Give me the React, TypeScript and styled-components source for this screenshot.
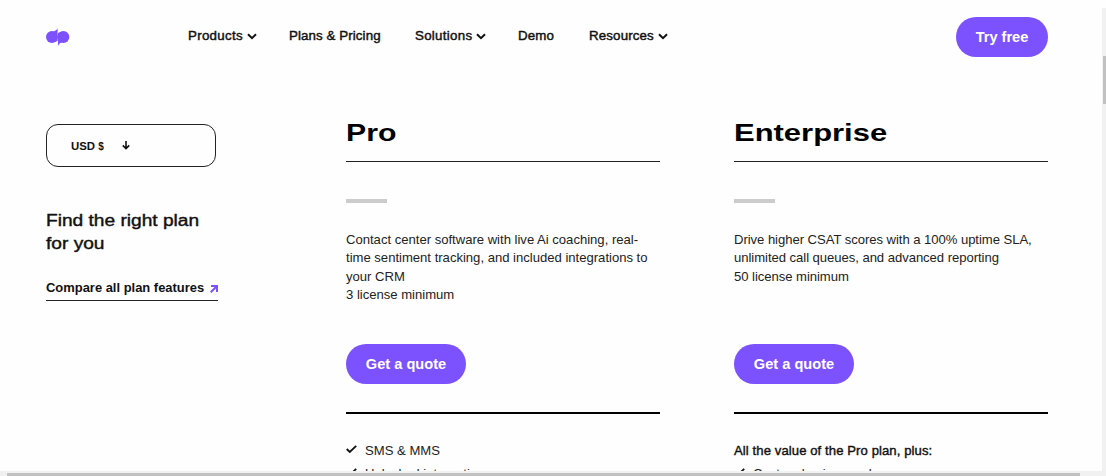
import styled, { createGlobalStyle } from 'styled-components';

const App = () => {
  return (
    <>
      <GlobalStyle />
      <Frame>
        <Page>
          <Header>
            <Logo />
            <Nav>
              <NavLink $width={101}><Label $spacing={0.3}>Products</Label><Chevron /></NavLink>
              <NavLink $width={126}><Label $spacing={0.1}>Plans &amp; Pricing</Label></NavLink>
              <NavLink $width={103}><Label $spacing={0.3}>Solutions</Label><Chevron /></NavLink>
              <NavLink $width={71}><Label $spacing={0.15}>Demo</Label></NavLink>
              <NavLink $width={82}><Label $spacing={0.15}>Resources</Label><Chevron /></NavLink>
            </Nav>
            <PillButton $width={92}>Try free</PillButton>
          </Header>
          <Main>
            <Sidebar>
              <Currency>
                <span>USD <small>$</small></span>
                <DownArrow />
              </Currency>
              <Tagline><Wide $scale={1.195}>Find the right plan<br />for you</Wide></Tagline>
              <CompareLink><span>Compare all plan features</span><OutArrow /></CompareLink>
            </Sidebar>
            {plans.map((plan) => (
              <Plan key={plan.name}>
                <PlanName><Wide $scale={plan.nameScale}>{plan.name}</Wide></PlanName>
                <Dash />
                <Description $spacing={plan.spacing}>
                  {plan.description.map((line) => <div key={line}>{line}</div>)}
                </Description>
                <PillButton $width={120}>Get a quote</PillButton>
                <Features>
                  {plan.intro && <Intro>{plan.intro}</Intro>}
                  {plan.features.map((feature) => (
                    <Feature key={feature}><Check />{feature}</Feature>
                  ))}
                </Features>
              </Plan>
            ))}
          </Main>
        </Page>
        <VerticalTrack><VerticalThumb /></VerticalTrack>
        <HorizontalTrack><HorizontalThumb /></HorizontalTrack>
      </Frame>
    </>
  )
}

const plans = [
  {
    name: 'Pro',
    nameScale: 1.26,
    spacing: -0.01,
    description: [
      'Contact center software with live Ai coaching, real-',
      'time sentiment tracking, and included integrations to',
      'your CRM',
      '3 license minimum',
    ],
    intro: '',
    features: ['SMS & MMS', 'Unlocked integrations'],
  },
  {
    name: 'Enterprise',
    nameScale: 1.29,
    spacing: -0.05,
    description: [
      'Drive higher CSAT scores with a 100% uptime SLA,',
      'unlimited call queues, and advanced reporting',
      '50 license minimum',
    ],
    intro: 'All the value of the Pro plan, plus:',
    features: ['Custom business rules'],
  },
];

const Logo = () => (
  <svg width="24" height="18" viewBox="0 0 24 18" fill="#7c52ff">
    <circle cx="5.9" cy="9" r="5.9" />
    <circle cx="17.4" cy="9" r="5.9" />
    <path d="M7.5 3.4C9.2 3.2 10.6 1.8 11.6.2V13L8 14zM12 5 15.5 3.4 16 14.6C14.4 14.8 13 16.2 12 17.8z" />
  </svg>
)

const Chevron = () => (
  <svg width="10" height="7" viewBox="0 0 10 7" fill="none" stroke="#111" strokeWidth="2">
    <path d="M1 1.2 5 5.2 9 1.2" />
  </svg>
)

const DownArrow = () => (
  <svg width="8" height="9" viewBox="0 0 8 9" fill="none" stroke="#111" strokeWidth="1.6">
    <path d="M4 0V7.5M.8 4.4 4 7.6 7.2 4.4" />
  </svg>
)

const OutArrow = () => (
  <svg width="8" height="8" viewBox="0 0 8 8" fill="none" stroke="#7c52ff" strokeWidth="2">
    <path d="M.7 7.3 6.8 1.2M1 1H7V7" />
  </svg>
)

const Check = () => (
  <svg width="11" height="8" viewBox="0 0 11 8" fill="none" stroke="#111" strokeWidth="1.8">
    <path d="M.7 4 3.8 7 10.2.8" />
  </svg>
)

const GlobalStyle = createGlobalStyle`
  body {
    margin: 0;
    background: #fefefe;
    color: #111;
    font-family: 'Liberation Sans', Arial, sans-serif;
    overflow: hidden;
  }
  * {
    box-sizing: border-box;
  }
`

const Frame = styled.div`
  display: grid;
  grid-template-columns: 1fr 4px;
  grid-template-rows: 471px 5px;
  width: 1106px;
  height: 476px;
`

const Page = styled.div`
  overflow: hidden;
  padding: 0 54px 0 46px;
`

const Header = styled.header`
  display: flex;
  align-items: center;
  height: 57px;
  padding-top: 17px;
  > button {
    margin-left: auto;
  }
`

const Nav = styled.nav`
  display: flex;
  margin-left: 118px;
  padding-bottom: 2px;
`

const NavLink = styled.a<{ $width: number }>`
  display: flex;
  align-items: center;
  gap: 4px;
  width: ${({ $width }) => $width}px;
  white-space: nowrap;
  font-size: 13.3px;
  line-height: 18px;
`

const Label = styled.span<{ $spacing: number }>`
  letter-spacing: ${({ $spacing }) => $spacing}px;
  -webkit-text-stroke: 0.45px #111;
`

const PillButton = styled.button<{ $width: number }>`
  width: ${({ $width }) => $width}px;
  height: 40px;
  flex-shrink: 0;
  padding: 0 0 1px;
  border: none;
  border-radius: 20px;
  background: #7c52ff;
  color: white;
  font-family: inherit;
  font-size: 14.6px;
  font-weight: 700;
  white-space: nowrap;
`

const Main = styled.main`
  display: grid;
  grid-template-columns: 226px 314px 314px;
  column-gap: 74px;
  padding-top: 59px;
`

const Sidebar = styled.aside`
  padding-top: 8px;
`

const Currency = styled.div`
  display: flex;
  align-items: center;
  gap: 18px;
  width: 170px;
  height: 43px;
  padding-left: 24px;
  border: 1px solid #222;
  border-radius: 12px;
  font-size: 11.4px;
  font-weight: 700;
  small {
    font-size: 10px;
  }
`

const Wide = styled.span<{ $scale: number }>`
  display: inline-block;
  transform: scaleX(${({ $scale }) => $scale});
  transform-origin: left;
  white-space: nowrap;
`

const Tagline = styled.h2`
  margin: 42px 0 0;
  font-size: 16px;
  font-weight: 400;
  line-height: 23px;
  -webkit-text-stroke: 0.4px #111;
`

const CompareLink = styled.a`
  display: flex;
  align-items: center;
  justify-content: space-between;
  width: 172px;
  height: 26px;
  margin-top: 20px;
  border-bottom: 1px solid #222;
  font-size: 12.95px;
  font-weight: 700;
  white-space: nowrap;
  > svg {
    margin-top: 3px;
  }
`

const Plan = styled.section`
  display: flex;
  flex-direction: column;
`

const PlanName = styled.h3`
  height: 46px;
  margin: 0;
  border-bottom: 1px solid #222;
  color: #000;
  font-size: 24px;
  font-weight: 700;
  line-height: 33px;
`

const Dash = styled.div`
  width: 41px;
  height: 4px;
  margin-top: 37px;
  background: #cccccc;
`

const Description = styled.div<{ $spacing: number }>`
  height: 113px;
  margin: 28px 0 0;
  color: #222;
  font-size: 13.1px;
  line-height: 18.3px;
  letter-spacing: ${({ $spacing }) => $spacing}px;
  white-space: nowrap;
`

const Features = styled.div`
  margin-top: 28px;
  padding-top: 25px;
  border-top: 2px solid #000;
  font-size: 13.1px;
  line-height: 23px;
`

const Intro = styled.div`
  letter-spacing: 0.09px;
  -webkit-text-stroke: 0.4px #111;
`

const Feature = styled.div`
  display: flex;
  align-items: center;
  gap: 8px;
  height: 23px;
  color: #222;
  > svg {
    margin-bottom: 4px;
  }
`

const VerticalTrack = styled.div`
  margin-top: 8px;
  padding: 48px 0 0 1px;
  background: #f1f1f1;
`

const VerticalThumb = styled.div`
  height: 48px;
  background: #c1c1c1;
`

const HorizontalTrack = styled.div`
  grid-column: 1 / -1;
  padding: 2px 26px 0 7px;
  background: #f1f1f1;
`

const HorizontalThumb = styled.div`
  height: 3px;
  background: #c1c1c1;
`

export default App;
